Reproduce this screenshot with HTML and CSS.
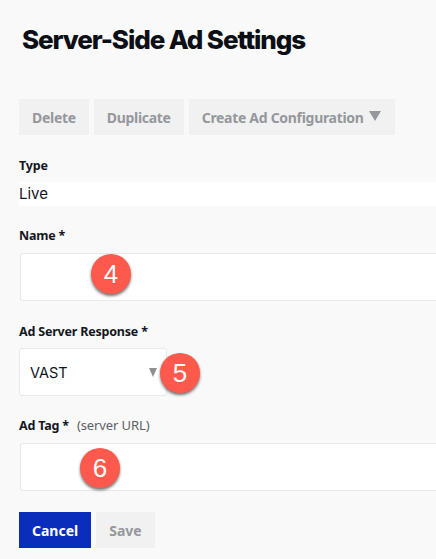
FILE: index.html
```html
<!DOCTYPE html>
<html lang="en">
<head>
  <meta charset="UTF-8" />
  <meta name="viewport" content="width=device-width, initial-scale=1.0" />
  <title>Server-Side Ad Settings</title>
  <link rel="stylesheet" href="styles.css">
</head>
<body>
  <h1 class="title">Server-Side Ad Settings</h1>

  <div class="toolbar">
    <button type="button" class="btn">Delete</button>
    <button type="button" class="btn">Duplicate</button>
    <button type="button" class="btn">Create Ad Configuration<span class="caret"></span></button>
  </div>

  <form class="settings">
    <div class="field field-type">
      <label class="label">Type</label>
      <div class="static-value">Live</div>
    </div>

    <div class="field field-name">
      <label class="label" for="adName">Name *</label>
      <div class="box">
        <input id="adName" class="text-input" type="text" />
        <span class="badge badge-4">4</span>
      </div>
    </div>

    <div class="field field-response">
      <label class="label">Ad Server Response *</label>
      <div class="box">
        <div class="select">VAST<span class="select-arrow"></span></div>
        <span class="badge badge-5">5</span>
      </div>
    </div>

    <div class="field field-tag">
      <label class="label" for="adTag">Ad Tag * <span class="hint">(server URL)</span></label>
      <div class="box">
        <input id="adTag" class="text-input" type="text" />
        <span class="badge badge-6">6</span>
      </div>
    </div>

    <div class="actions">
      <button type="button" class="btn btn-primary">Cancel</button>
      <button type="button" class="btn btn-save">Save</button>
    </div>
  </form>
</body>
</html>
```

FILE: styles.css
```css
* {
  box-sizing: border-box;
  margin: 0;
  padding: 0;
}

html, body {
  height: 100%;
  overflow: hidden;
}

body {
  padding: 23px 0 0 19px;
  background-color: #f9f9f9;
  color: #12151c;
  font-family: Inter, "Liberation Sans", sans-serif;
}

.title {
  margin-left: 3px;
  font-family: Inter, sans-serif;
  font-size: 26px;
  line-height: 34px;
  font-weight: 800;
  letter-spacing: -1.1px;
  color: #0c0f16;
  white-space: nowrap;
}

.toolbar {
  display: flex;
  gap: 5px;
  margin-top: 42px;
}

.btn {
  display: flex;
  align-items: center;
  height: 36px;
  padding: 0 13px;
  border: none;
  background-color: #f1f1f1;
  color: #95979c;
  font-family: "Noto Sans", sans-serif;
  font-size: 14px;
  font-weight: 700;
  white-space: nowrap;
}

.toolbar .btn {
  letter-spacing: -0.3px;
}

.caret {
  width: 0;
  height: 0;
  margin: 0 1px 2px 5px;
  border-left: 6px solid transparent;
  border-right: 6px solid transparent;
  border-top: 10px solid #95979c;
}

.btn-primary {
  width: 72px;
  background-color: #0a2dbb;
  color: #fff;
}

.btn-save {
  width: 59px;
  justify-content: center;
  padding: 0;
}

.label {
  display: block;
  font-family: "Noto Sans", sans-serif;
  font-size: 12.5px;
  line-height: 18px;
  font-weight: 700;
  letter-spacing: -0.2px;
  color: #14171e;
}

.hint {
  margin-left: 5px;
  font-size: 13px;
  font-weight: 400;
  letter-spacing: -0.1px;
  color: #5d6067;
}

.field-type {
  margin-top: 22px;
}

.static-value {
  height: 24px;
  margin-top: 7px;
  background-color: #fff;
  font-size: 15px;
  line-height: 24px;
}

.field-name {
  margin-top: 21px;
}

.field-response {
  margin-top: 22px;
}

.field-tag {
  margin-top: 20px;
}

.box {
  position: relative;
  margin-top: 8px;
}

.field-response .box {
  margin-top: 7px;
}

.text-input {
  display: block;
  width: calc(100% - 1px);
  height: 48px;
  margin-left: 1px;
  border: 1px solid #e9e9e9;
  border-right: none;
  border-radius: 3px 0 0 3px;
  background-color: #fff;
}

.select {
  position: relative;
  width: 148px;
  height: 48px;
  padding-left: 10px;
  border: 1px solid #e9e9e9;
  border-radius: 3px;
  background-color: #fff;
  font-size: 14.5px;
  line-height: 47px;
}

.select-arrow {
  position: absolute;
  top: 19px;
  right: 9px;
  border-left: 4.5px solid transparent;
  border-right: 4.5px solid transparent;
  border-top: 9px solid #8d8f92;
}

.badge {
  position: absolute;
  width: 40px;
  height: 40px;
  border-radius: 50%;
  background-color: #fd5a4d;
  box-shadow: 0 2px 3px rgba(0, 0, 0, 0.55);
  color: #fff;
  font-family: "Liberation Sans", sans-serif;
  font-size: 26px;
  line-height: 40px;
  text-align: center;
}

.badge-4 {
  top: 1px;
  left: 72px;
}

.badge-5 {
  top: 5px;
  left: 141px;
}

.badge-6 {
  top: 5px;
  left: 61px;
}

.actions {
  display: flex;
  gap: 5px;
  margin-top: 21px;
}
```
